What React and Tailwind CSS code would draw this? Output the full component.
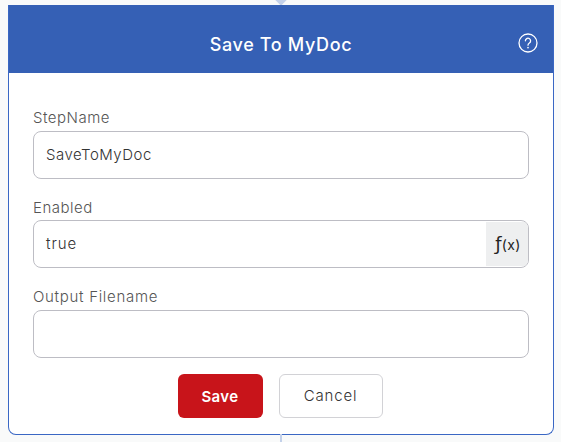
export default function App() {
  const font = "font-['Inter','Liberation_Sans',sans-serif]";
  return (
    <div className={`relative h-[442px] w-[561px] overflow-hidden bg-[#f9fafa] pl-2 pt-[5px] ${font}`}>
      <div className="absolute left-[277px] top-[-4px] h-2 w-2 rotate-45 bg-[#c3d1ea]" />
      <div className="absolute bottom-0 left-[280px] h-2 w-0.5 bg-[#c3d1ea]" />
      <div className="flex h-[430px] w-[546px] flex-col overflow-hidden rounded-b-lg border border-t-0 border-[#3a67c4] bg-white">
        <header className="relative -mx-px flex h-[68px] shrink-0 items-center justify-center bg-[#3560b5] pt-[11px] text-white">
          <h1 className="text-[18px] font-medium tracking-[0.65px]">Save To MyDoc</h1>
          <svg className="absolute right-[16px] top-[28px]" width="20" height="20" viewBox="0 0 20 20" fill="none" stroke="white" strokeWidth="1.3" strokeLinecap="round">
            <circle cx="10" cy="10" r="9" />
            <path d="M7.4 7.8a2.6 2.6 0 1 1 4 2.2c-.9.6-1.4 1.1-1.4 2.2" />
            <path d="M10 14.6v.1" strokeWidth="1.6" />
          </svg>
        </header>
        <div className="flex flex-col px-6 pt-[32px] text-[#4a4a4a]">
          <label className="mb-[4px] h-[22px] text-[15px] font-light leading-[25px] tracking-[0.5px] text-[#555]">StepName</label>
          <div className="flex h-12 w-[496px] items-center rounded-lg border border-[#bdbdc4] pl-3 text-[15px] font-light tracking-[0.5px] text-[#333]">SaveToMyDoc</div>
          <label className="mb-[4px] mt-[19px] h-[18px] text-[15px] font-light leading-[20px] tracking-[0.5px] text-[#555]">Enabled</label>
          <div className="flex h-12 w-[496px] items-center justify-between overflow-hidden rounded-lg border border-[#bdbdc4] pl-3 text-[15px] font-light tracking-[0.9px] text-[#333]">
            <span>true</span>
            <span className="flex h-[44px] w-[42px] items-center justify-center bg-[#eeeff0] pl-[2px] font-['DejaVu_Sans',sans-serif] font-normal tracking-normal text-[#222]">
              <span className="flex h-5 items-center text-[18px] leading-none">ƒ</span>
              <span className="flex h-5 items-center pt-[2px] font-['Inter',sans-serif] text-[14px] leading-none tracking-[0.4px]">(x)</span>
            </span>
          </div>
          <label className="mb-[4px] mt-[19px] h-[19px] text-[15px] font-light leading-[20px] tracking-[0.7px] text-[#555]">Output Filename</label>
          <div className="h-12 w-[496px] rounded-lg border border-[#bdbdc4]" />
          <div className="mt-4 flex justify-center gap-4 pr-[2px]">
            <button className="h-11 w-[85px] rounded-md bg-[#c8141a] pt-[2px] text-[15px] font-semibold tracking-[0.4px] text-white">Save</button>
            <button className="h-11 w-[104px] rounded-md border border-[#d2d2d6] bg-white pt-px text-[15px] font-light tracking-[0.8px] text-[#333]">Cancel</button>
          </div>
        </div>
      </div>
    </div>
  );
}
